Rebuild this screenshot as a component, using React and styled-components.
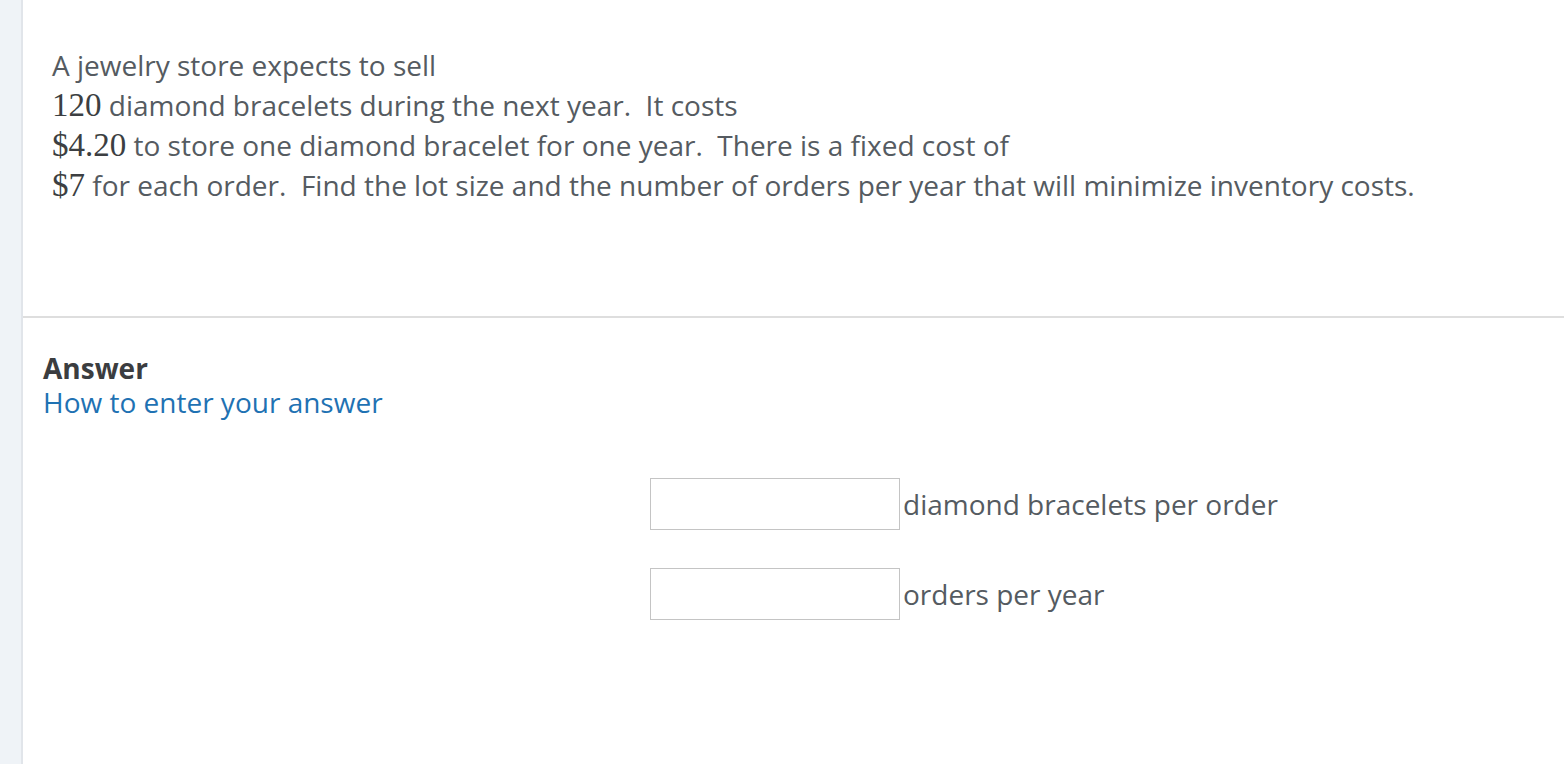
import React from "react";
import styled, { createGlobalStyle } from "styled-components";

const GlobalStyle = createGlobalStyle`
  html, body {
    margin: 0;
    padding: 0;
    background: #ffffff;
  }
  body {
    font-family: "Open Sans", "Noto Sans", sans-serif;
    color: #555b61;
  }
`;

const Page = styled.div`
  display: flex;
  min-height: 764px;
`;

const Sidebar = styled.div`
  width: 21px;
  flex-shrink: 0;
  background: #eff3f7;
  border-right: 2px solid #e1e5ea;
`;

const Main = styled.div`
  flex: 1;
  display: flex;
  flex-direction: column;
`;

const Question = styled.section`
  padding: 45px 20px 111px 29px;
  border-bottom: 2px solid #dedede;
  font-size: 28px;
  line-height: 40px;
`;

const Line = styled.div`
  white-space: nowrap;
  height: 40px;
`;

const Num = styled.span`
  font-family: "Liberation Serif", "Times New Roman", serif;
  font-size: 33px;
  color: #3c3f42;
`;

const AnswerSection = styled.section`
  padding: 33px 20px 0 20px;
`;

const AnswerTitle = styled.div`
  font-size: 28px;
  line-height: 34px;
  font-weight: 700;
  color: #3b3d40;
`;

const HelpLink = styled.a`
  display: block;
  font-size: 28px;
  line-height: 34px;
  color: #1f72b3;
  text-decoration: none;
`;

const Fields = styled.div`
  display: flex;
  flex-direction: column;
  gap: 38px;
  margin: 59px 0 0 607px;
`;

const FieldRow = styled.div`
  display: flex;
  align-items: center;
  gap: 3px;
`;

const Input = styled.input`
  width: 250px;
  height: 52px;
  box-sizing: border-box;
  border: 1px solid #c4c4c4;
  border-radius: 0;
  padding: 0 8px;
  font-size: 24px;
  font-family: inherit;
`;

const Unit = styled.span`
  font-size: 28px;
  line-height: 34px;
  color: #555b61;
`;

export default function App() {
  return (
    <>
      <GlobalStyle />
      <Page>
        <Sidebar />
        <Main>
          <Question>
            <Line>A jewelry store expects to sell</Line>
            <Line>
              <Num>120</Num> diamond bracelets during the next year.&nbsp; It costs
            </Line>
            <Line>
              <Num>$4.20</Num> to store one diamond bracelet for one year.&nbsp; There is a fixed cost of
            </Line>
            <Line>
              <Num>$7</Num> for each order.&nbsp; Find the lot size and the number of orders per year that will minimize inventory costs.
            </Line>
          </Question>
          <AnswerSection>
            <AnswerTitle>Answer</AnswerTitle>
            <HelpLink href="#">How to enter your answer</HelpLink>
            <Fields>
              <FieldRow>
                <Input type="text" />
                <Unit>diamond bracelets per order</Unit>
              </FieldRow>
              <FieldRow>
                <Input type="text" />
                <Unit>orders per year</Unit>
              </FieldRow>
            </Fields>
          </AnswerSection>
        </Main>
      </Page>
    </>
  );
}
